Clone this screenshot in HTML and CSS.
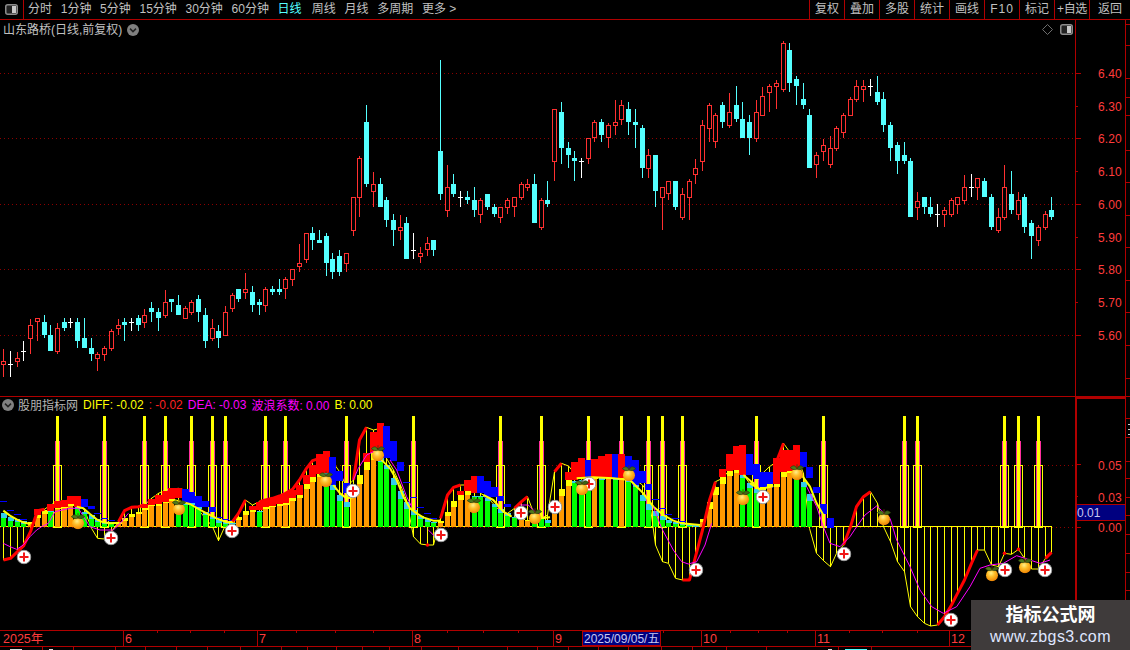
FILE: index.html
```html
<!DOCTYPE html>
<html lang="zh-CN">
<head>
<meta charset="utf-8">
<title>山东路桥</title>
<link rel="stylesheet" href="styles.css">
</head>
<body>
<div class="app">
  <header class="toolbar">
    <div class="tool-left">
      <div class="icon-cell"><svg class="win-icon" width="13" height="11" viewBox="0 0 13 11"><rect x="0.75" y="0.75" width="11.5" height="9.5" rx="2" fill="#222" stroke="#8c8c8c" stroke-width="1.5"/><rect x="7" y="2" width="4" height="7" fill="#c8c8c8"/></svg></div>
      <nav class="periods">
        <span>分时</span><span>1分钟</span><span>5分钟</span><span>15分钟</span><span>30分钟</span><span>60分钟</span><span class="on">日线</span><span>周线</span><span>月线</span><span>多周期</span><span>更多 &gt;</span>
      </nav>
    </div>
    <nav class="actions">
      <span>复权</span><span>叠加</span><span>多股</span><span>统计</span><span>画线</span><span class="f10">F10</span><span>标记</span><span class="narrow">+自选</span><span>返回</span>
    </nav>
  </header>

  <section class="panel panel-price">
    <svg id="price" class="chart" viewBox="0 20 1130 376" width="1130" height="376"></svg>
    <div class="title">山东路桥(日线,前复权)<svg class="chev" width="12" height="12" viewBox="0 0 12 12"><circle cx="6" cy="6" r="6" fill="#808080"/><path d="M3 4.6 6 7.6 9 4.6" fill="none" stroke="#222" stroke-width="1.5"/></svg></div>
    <div class="corner">
      <svg width="11" height="11" viewBox="0 0 11 11"><path d="M5.5 0.5 10.5 5.5 5.5 10.5 0.5 5.5Z" fill="none" stroke="#6e6e6e"/></svg>
      <svg width="13" height="11" viewBox="0 0 13 11"><rect x="0.75" y="0.75" width="11.5" height="9.5" rx="2" fill="#222" stroke="#8c8c8c" stroke-width="1.5"/><rect x="7" y="2" width="4" height="7" fill="#c8c8c8"/></svg>
    </div>
  </section>

  <section class="panel panel-ind">
    <svg id="ind" class="chart" viewBox="0 397 1130 233" width="1130" height="233">
      <defs>
        <radialGradient id="orange" cx="0.42" cy="0.32" r="0.75">
          <stop offset="0" stop-color="#fff08a"/>
          <stop offset="0.4" stop-color="#ffbe28"/>
          <stop offset="0.85" stop-color="#f08a08"/>
          <stop offset="1" stop-color="#b86000"/>
        </radialGradient>
        <symbol id="fruit" viewBox="0 0 14 17" width="14" height="17">
          <circle cx="7" cy="10.8" r="6" fill="url(#orange)"/>
          <path d="M7 5.6 C5.5 1.5 3 1.5 0.3 4.2 C2.5 6.2 5 6.6 7 5.6Z" fill="#4f7a1c" stroke="#26380c" stroke-width="0.6"/>
          <path d="M7 5.6 C8.5 1.5 11 1.5 13.7 4.2 C11.5 6.2 9 6.6 7 5.6Z" fill="#3f6416" stroke="#26380c" stroke-width="0.6"/>
          <path d="M7 5.6 7 0.8" stroke="#5a3408" stroke-width="1"/>
        </symbol>
        <symbol id="plus" viewBox="0 0 15 15" width="15" height="15">
          <circle cx="7.5" cy="7.5" r="6.8" fill="#fff" stroke="#9a9a9a" stroke-width="1"/>
          <path d="M7.5 3v9M3 7.5h9" stroke="#f01818" stroke-width="2"/>
        </symbol>
      </defs>
    </svg>
    <div class="legend">
      <svg class="chev" width="12" height="12" viewBox="0 0 12 12"><circle cx="6" cy="6" r="6" fill="#808080"/><path d="M3 4.6 6 7.6 9 4.6" fill="none" stroke="#222" stroke-width="1.5"/></svg>
      <span class="lg-name">股朋指标网</span>
      <span class="lg-y">DIFF: -0.02</span>
      <span class="lg-r">: -0.02</span>
      <span class="lg-m">DEA: -0.03</span>
      <span class="lg-m">波浪系数: 0.00</span>
      <span class="lg-y">B: 0.00</span>
    </div>
  </section>

  <div class="timeaxis"><svg id="time" viewBox="0 631 1130 15" width="1130" height="15"></svg></div>
  <div class="status" id="status"></div>

  <aside class="watermark">
    <div class="wm-title">指标公式网</div>
    <div class="wm-url">www.zbgs3.com</div>
  </aside>
</div>
<script src="chart.js"></script>
</body>
</html>
```

FILE: styles.css
```css
* { box-sizing: border-box; }
html, body { margin: 0; padding: 0; background: #000; }
body { font-family: "Liberation Sans", "Noto Sans CJK SC", sans-serif; color: #c0c0c0; }
.app { position: relative; width: 1130px; height: 650px; overflow: hidden; display: flex; flex-direction: column; background: #000; }

.toolbar { flex: 0 0 20px; display: flex; justify-content: space-between; border-bottom: 1px solid #b00000; font-size: 12px; line-height: 19px; }
.tool-left { display: flex; }
.icon-cell { width: 24px; border-right: 1px solid #b00000; display: flex; align-items: center; justify-content: center; padding-bottom: 1px; }
.periods { display: flex; gap: 8.7px; padding-left: 4px; }
.periods span { white-space: nowrap; }
.periods .on { color: #55ffff; margin-right: 1.5px; }
.actions { display: flex; }
.actions span { width: 35px; text-align: center; border-left: 1px solid #b00000; white-space: nowrap; }
.actions span:last-child { width: 41px; }
.actions .f10 { letter-spacing: 1px; }
.actions .narrow { letter-spacing: -0.3px; }

.panel { position: relative; flex: none; }
.panel-price { height: 376px; }
.panel-ind { height: 234px; border-top: 1px solid #b00000; }
.chart { display: block; }

.title { position: absolute; left: 3px; top: 2px; font-size: 12px; line-height: 16px; display: flex; align-items: center; gap: 5px; white-space: nowrap; }
.corner { position: absolute; left: 1042px; top: 4px; display: flex; gap: 7px; align-items: center; }
.corner svg { display: block; }

.legend { position: absolute; left: 2px; top: 0; height: 15px; display: flex; align-items: center; font-size: 12px; white-space: nowrap; }
.legend span { margin-left: 5px; }
.legend .lg-name { margin-left: 4px; }
.lg-name { color: #b4b4b4; }
.lg-y { color: #ffff00; }
.lg-r { color: #ff2020; }
.lg-m { color: #ff00ff; }

.timeaxis { flex: 0 0 17px; border-top: 1px solid #b00000; border-bottom: 1px solid #b00000; }
.timeaxis svg { display: block; }
.status { flex: 1; display: flex; overflow: hidden; }
.status .cell { flex: none; border-right: 1px solid #b00000; height: 3px; padding-top: 2px; }
.status .mark { display: block; height: 1px; background: #e0e0e0; }
.status .mark.cy { background: #55ffff; }

.watermark { position: absolute; left: 971px; top: 600px; width: 159px; height: 50px; background: #3f3b3b; text-align: center; }
.wm-title { font-size: 18px; line-height: 24px; font-weight: 700; color: #fff; padding-top: 3px; }
.wm-url { font-size: 16px; line-height: 19px; color: #dfe6ff; letter-spacing: 0.4px; }

.t-axis { font-size: 12px; fill: #ff3c3c; font-family: "Liberation Sans", sans-serif; letter-spacing: 0.1px; }
.t-sel { font-size: 12px; fill: #c8c8f0; font-family: "Liberation Sans", "Noto Sans CJK SC", sans-serif; }
.t-time { font-size: 12.5px; fill: #ff3c3c; font-family: "Liberation Sans", "Noto Sans CJK SC", sans-serif; }
```

FILE: chart.js
```js
const NS = 'http://www.w3.org/2000/svg';
const el = (p, n, a, t) => {
  const e = document.createElementNS(NS, n);
  for (const k in a) e.setAttribute(k, a[k]);
  if (t !== undefined) e.textContent = t;
  p.appendChild(e);
  return e;
};
const RED = '#b00000', DOT = '#8c0000';
const cx = i => Math.round(3.3 + 6.718 * i);
const rect = (p, x, y, w, h, f) => el(p, 'rect', { x, y, width: w, height: Math.max(h, 0), fill: f, 'shape-rendering': 'crispEdges' });
const hline = (p, x1, x2, y, c, dash) => el(p, 'line', Object.assign({ x1, x2, y1: y, y2: y, stroke: c, 'shape-rendering': 'crispEdges' }, dash ? { 'stroke-dasharray': dash } : {}));
const vline = (p, x, y1, y2, c, w) => el(p, 'line', { x1: x, x2: x, y1, y2, stroke: c, 'stroke-width': w || 1, 'shape-rendering': 'crispEdges' });

/* ---------- price panel: candles as [type, high, low, bodyTop, bodyBottom] ---------- */
const A = [['r',388,470,424,434],['w',393,470,433,433],['r',397,440,415,425],['w',363,422,394,394],['r',297,402,316,356],['r',295,362,295,307],['c',286,354,307,345],['c',316,393,346,393],['r',310,402,325,395],['c',295,333,307,324],['w',295,324,307,307],['c',295,384,307,363],['c',295,384,355,384],['c',355,423,385,402],['r',397,453,403,416],['r',379,423,385,404],['r',328,393,334,386],['r',297,346,316,326],['c',295,363,307,315],['w',295,333,307,307],['c',286,333,295,315],['r',267,324,286,308],['c',247,306,265,276],['c',265,333,277,294],['r',210,294,247,287],['c',237,276,237,246],['c',226,285,256,285],['r',258,297,265,297],['r',241,285,247,278],['c',226,306,237,276],['c',265,384,286,363],['r',297,363,325,357],['c',316,384,334,354],['r',258,347,277,347],['r',220,276,226,266],['c',207,246,207,237],['r',160,237,208,218],['c',198,276,217,255],['c',238,285,247,255],['r',202,276,208,258],['c',198,225,207,216],['c',178,225,207,216],['r',172,237,178,208],['r',148,198,148,179],['r',72,156,130,140],['r',40,129,40,119],['c',22,90,40,60],['c',30,70,60,69],['c',40,168,48,129],['c',100,177,118,156],['c',91,168,108,156],['r',100,156,100,131]];
const B = [['r',441,557,442,542],['r',319,500,325,443],['c',166,411,217,402],['r',366,470,403,425],['c',385,470,403,470],['c',442,530,451,509],['c',492,588,511,539],['r',496,570,532,542],['c',502,627,520,627],['w',550,627,601,601],['r',592,638,610,620],['r',562,618,580,601],['c',570,618,570,600],['c',30,450,304,432],['r',346,500,412,482],['c',373,441,403,432],['w',423,471,442,442],['c',423,462,442,451],['c',412,500,451,480],['r',445,518,451,494],['c',432,480,432,471],['c',463,501,472,492],['r',472,519,472,503],['r',445,492,451,473],['r',442,500,442,472],['r',397,450,403,443],['r',388,423,403,413],['c',373,519,403,519],['r',445,540,451,533],['c',393,471,451,462],['r',178,393,178,335],['c',157,342,186,294],['c',277,354,295,315],['c',304,393,324,333],['w',325,384,334,334],['r',265,342,265,326],['r',211,275,217,265],['c',208,276,217,255],['r',220,294,226,265],['r',151,255,217,227],['r',151,225,166,209],['c',157,255,178,216],['c',178,294,217,225],['c',226,384,235,354],['r',298,384,316,356],['c',316,471,316,423],['r',412,540,412,443],['r',394,450,394,433],['c',394,480,394,471],['r',415,510,433,503],['r',388,510,394,443],['r',328,402,355,374],['r',211,363,226,335],['r',160,276,166,236],['r',190,294,196,277]];
const C = [['c',217,294,226,276],['r',190,294,247,288],['c',168,276,226,266],['c',217,324,268,324],['c',256,375,277,324],['r',211,335,247,327],['r',172,258,199,258],['r',163,247,169,189],['r',151,237,160,170],['r',33,186,40,179],['c',40,186,60,159],['c',139,226,148,168],['c',160,237,208,225],['c',238,414,256,414],['r',367,444,376,404],['r',328,393,346,365],['r',319,414,355,404],['r',289,364,295,356],['r',250,324,256,308],['r',202,258,208,258],['r',151,216,169,209],['r',151,216,169,179],['w',148,198,169,169],['c',139,225,186,216],['c',187,306,208,285],['c',277,393,286,354],['c',337,432,346,393],['c',337,402,376,393],['c',385,561,394,561],['r',487,570,512,533],['c',502,552,502,531],['c',502,561,532,552],['w',522,590,553,553],['r',532,590,541,554],['r',505,560,511,554],['r',502,552,502,524],['r',436,522,472,513],['w',432,501,472,472],['r',445,510,445,473],['c',445,501,454,501],['c',492,600,502,591],['r',534,608,562,603],['r',406,570,472,563],['c',423,552,492,540],['r',487,570,511,554],['c',492,608,502,591],['c',571,687,580,618],['r',584,648,592,632],['r',544,600,553,594],['c',502,570,541,561]];
const conv = (list, oy) => list.map(c => [c[0], oy + c[1] / 3, oy + c[2] / 3, oy + c[3] / 3, oy + c[4] / 3].map((v, k) => k ? Math.round(v) : v));
const candles = [...conv(A, 220), ...conv(B, 50), ...conv(C, 30)];

const price = document.getElementById('price');
[73, 138, 204, 269, 335].forEach(y => hline(price, 0, 1075, y + .5, DOT, '1 3'));
const CY = '#54ffff', CR = '#ff3030', CW = '#ffffff';
candles.forEach((c, i) => {
  const x = cx(i), [t, hi, lo, top, bot] = c;
  if (t === 'w') {
    rect(price, x, hi, 1, lo - hi, CW);
    rect(price, x - 2, top, 5, 1, CW);
  } else if (t === 'c') {
    rect(price, x, hi, 1, lo - hi, CY);
    rect(price, x - 2, top, 5, bot - top, CY);
  } else {
    rect(price, x, hi, 1, lo - hi, CR);
    el(price, 'rect', { x: x - 1.5, y: top + .5, width: 4, height: Math.max(bot - top - 1, 1), fill: '#000', stroke: CR, 'shape-rendering': 'crispEdges' });
  }
});
/* axis */
vline(price, 1075.5, 20, 396, RED);
vline(price, 1125.5, 20, 396, RED);
[['6.40',74],['6.30',107],['6.20',139],['6.10',172],['6.00',205],['5.90',238],['5.80',270],['5.70',303],['5.60',336]].forEach(([t, y], k) => {
  rect(price, 1076, y - 1, k % 2 ? 2 : 5, 1, RED);
  el(price, 'text', { x: 1098, y: y + 4, class: 't-axis' }, t);
});
[24, 45, 78, 97, 115, 150, 182, 215, 247, 280, 312, 345, 378].forEach(y => rect(price, 1126, y, 4, 1, RED));

/* ---------- indicator panel (all y values: reference row = 390 + y/3) ---------- */
const ind = document.getElementById('ind');
const Y = z => 390 + z / 3;
hline(ind, 0, 1075, 465.5, DOT, '1 3');
hline(ind, 0, 1075, 527.5, DOT, '1 3');

const spikes = [8,15,21,24,28,31,33,39,42,51,61,74,80,87,92,96,98,101,112,122,134,136,149,151,154];
spikes.forEach(i => {
  const x = cx(i);
  rect(ind, x - 2, 441, 5, 86, '#ff2f9f');
  rect(ind, x - 1, 416, 3, 111, '#ffff00');
  el(ind, 'rect', { x: x - 3.5, y: 465.5, width: 8, height: 61.5, fill: 'none', stroke: '#ffff00', 'shape-rendering': 'crispEdges' });
});

const diff = [510,505,485,468,425,362,358,345,335,332,330,340,360,415,445,447,425,395,362,352,350,345,325,310,300,297,295,300,330,360,385,410,452,405,395,370,330,345,335,330,325,318,310,298,270,235,212,205,205,215,245,290,270,150,112,120,115,205,240,285,330,440,462,465,465,385,315,292,285,285,290,310,322,345,365,370,355,335,320,375,385,375,245,220,228,250,265,265,262,262,262,265,265,265,270,285,310,465,515,520,565,570,570,500,420,330,275,265,240,230,250,280,275,250,230,215,160,185,200,250,415,490,512,530,490,465,410,350,320,305,340,410,455,515,545,650,680,700,708,705,680,645,610,570,520,480,480,525,530,490,493,478,505,537,537,505,487];
const pts = idx => idx.map(i => (cx(i) + .5) + ',' + Y(diff[i])).join(' ');
const base = 527;
diff.forEach((d, i) => {
  const y = Y(d);
  vline(ind, cx(i) + .5, Math.min(y, base), Math.max(y, base), '#ffff00');
});
el(ind, 'line', { x1: 0, x2: cx(156) + 1, y1: 526.5, y2: 526.5, stroke: '#ffff00', 'stroke-width': 1.5, 'shape-rendering': 'crispEdges' });
el(ind, 'polyline', { points: pts(diff.map((_, i) => i)), fill: 'none', stroke: '#ffff00', 'stroke-width': 1 });

const bars = [['g',370,384,'b',333,335],['g',381,393,'b',360,362],['g',388,397,'b',372,374],['g',393,401,'b',388,390],['o',395,401],['o',375,385,'r',358,375],['o',361,372],['g',362,365,'r',342,362],['o',353,358,'r',332,353],['o',350,354,'r',330,350],['o',342,347,'r',318,342],['g',350,358,'r',318,350],['g',365,372,'b',327,352],['g',375,387,'b',348,357],['g',388,396,'b',368,371],['g',396,403,'b',384,387],['g',396,403,'b',390,393],['o',397,402],['o',385,392],['o',373,381],['o',365,372],['o',354,360,'r',342,354],['o',345,349,'r',328,345],['o',343,347,'r',315,343],['o',335,340,'r',303,335],['o',328,332,'r',294,328],['g',345,350,'r',293,325],['g',340,345,'b',297,340],['g',340,345,'b',305,340],['g',352,358,'b',318,352],['g',367,376,'b',333,350],['g',380,388,'b',352,365],['g',390,398,'b',380,383],['g',397,403,'b',388,391],['g',398,403,'b',391,394],['o',381,390],['o',363,375],['o',360,365,'r',348,360],['g',362,365,'r',335,360],['o',350,356,'r',330,350],['o',347,352,'r',325,347],['o',343,348,'r',318,343],['o',338,345,'r',310,338],['o',325,333,'r',300,325],['o',315,325,'r',285,315],['o',282,298,'r',255,282],['o',260,275,'r',225,260],['o',253,262,'r',192,253],['g',250,258,'r',183,250],['g',285,300,'b',200,285],['g',315,333,'b',243,273],['g',335,350,'b',280,310],['o',305,322],['o',255,282],['o',215,240,'r',190,215],['o',190,210,'r',125,190],['g',205,215,'r',100,175],
['g',225,237,'b',108,205],['g',263,285,'b',153,213],['g',303,327,'b',215,243],['g',337,357,'b',277,280],['g',360,375,'b',321,323],['g',378,387,'b',351,353],['g',388,395,'b',369,371],['g',395,400,'b',384,386],['o',393,398],['o',367,378],['o',333,351],['o',315,330,'r',303,315],['o',303,315,'r',270,303],['g',318,322,'r',258,310],['g',318,322,'b',258,310],['g',323,333,'b',273,323],['g',342,352,'b',292,320],['g',357,370,'b',318,333],['g',368,378,'b',342,352],['g',380,384],['o',386,390],['o',390,394],['g',384,388],['g',382,386],['g',390,400],['o',362,370],['o',297,318],['o',270,288,'r',245,270],['g',273,278,'r',215,270],['g',270,275,'r',205,265],['g',264,268,'b',210,262],['o',264,268,'r',207,264],['g',263,270,'r',198,263],['o',264,268,'r',192,264],['g',266,270,'b',192,265],['o',264,268,'r',192,264],['g',268,275,'b',197,260],['g',285,292,'b',210,285],['g',315,333,'b',243,280],['g',342,360,'b',282,300],['g',363,378,'b',327,329],['g',378,390,'b',354,356],['g',390,398,'b',372,374],['g',396,403,'b',385,387],['g',398,405,'b',392,394],['g',402,407],['g',405,410],['o',388,396],['o',336,357],['o',292,315],['o',262,283,'r',238,262],['o',243,258,'r',192,243],['o',240,248,'r',168,240],['g',255,263,'r',165,255],['g',280,295,'b',192,255],['g',297,310,'b',222,268],
['o',290,300,'b',245,293],['o',283,290,'b',245,293],['o',282,290,'r',205,282],['o',245,260,'r',180,245],['o',243,250,'r',180,243],['g',240,248,'r',165,235],['g',277,292,'b',186,232],['g',312,333,'b',232,263],[null,0,0,'b',292,310],[null,0,0,'b',342,372],[null,0,0,'b',384,413]];
const COLS = { g: '#00ff00', o: '#ff9900' };
const CAPS = { g: '#33ccee', o: '#ffff00' };
const EXT = { r: '#ff0000', b: '#0000ff' };
const snap = z => Math.round(Y(z));
bars.forEach((b, i) => {
  const x = cx(i), [t, c1, c2, e, e1, e2] = b;
  if (e) rect(ind, x - 3, snap(e1), 7, Math.max(snap(e2) - snap(e1), 1), EXT[e]);
  if (t) {
    rect(ind, x - 2, snap(c2), 5, base - snap(c2), COLS[t]);
    rect(ind, x - 2, snap(c1), 6, Math.max(snap(c2) - snap(c1), 1), CAPS[t]);
  }
});

/* thick smoothing lines */
const zline = (ox, list, stroke, w) => el(ind, 'polyline', { points: list.map(p => (ox + p[0] / 3) + ',' + Y(p[1])).join(' '), fill: 'none', stroke, 'stroke-width': w, 'stroke-linejoin': 'round' });
[[0, [[10,362],[30,377],[50,388],[70,397],[90,402]]],
 [0, [[230,350],[250,355],[270,372],[290,388],[310,397],[330,400],[360,398]]],
 [0, [[520,330],[570,342],[610,365],[650,385],[680,397],[705,395]]],
 [0, [[1000,285],[1020,310],[1040,325],[1060,322]]],
 [380, [[0,205],[30,235],[50,270],[70,320],[90,355],[110,370],[130,382],[160,392],[180,392]]],
 [380, [[310,315],[340,330],[370,365],[395,380]]],
 [380, [[480,385],[510,382]]],
 [380, [[590,265],[640,262],[700,265],[750,270],[790,310],[820,350],[850,375],[880,392],[905,400],[960,405]]],
 [380, [[1090,255],[1120,280],[1140,300]]],
 [750, [[0,280],[30,298],[70,288]]],
 [750, [[140,240],[160,262],[180,290],[200,340],[220,375]]]
].forEach(([ox, l]) => zline(ox, l, '#ffff00', 2));

const range = (a, b) => Array.from({ length: b - a + 1 }, (_, k) => a + k);
[[0,6],[17,21],[34,36],[38,47],[52,54],[65,68],[76,78],[82,83],[101,106],[115,116],[125,129],[139,145],[155,156]].forEach(([a, b]) => {
  el(ind, 'polyline', { points: pts(range(a, b)), fill: 'none', stroke: '#ff0000', 'stroke-width': 3, 'stroke-linejoin': 'round' });
});
[63, 149, 151].forEach(i => el(ind, 'circle', { cx: cx(i) + .5, cy: Y(diff[i]), r: 1.8, fill: '#ff0000' }));

/* DEA */
[[0, [[10,460],[30,470],[50,478],[70,465],[90,440],[110,420],[125,410],[145,400],[165,365],[210,355],[235,355],[270,410],[300,420],[340,420],[365,395],[385,370]]],
 [0, [[1060,270],[1075,235],[1100,195],[1140,175]]],
 [380, [[30,210],[50,240],[80,320],[95,350]]],
 [380, [[145,420],[165,440]]],
 [380, [[420,345],[445,345],[470,370]]],
 [380, [[820,350],[845,415],[880,480],[905,515],[925,522],[950,515],[975,465],[995,400]]],
 [750, [[170,290],[200,350],[220,410],[240,460],[270,470],[300,440],[320,410],[345,375],[380,348],[420,385],[440,450],[480,530],[510,600],[545,650],[580,670],[620,650],[660,590],[690,535],[720,525],[760,520],[800,497],[840,510],[870,520],[900,510]]]
].forEach(([ox, l]) => zline(ox, l, '#ff00ff', 1));

/* markers */
const use = (id, x, y, w, h) => el(ind, 'use', { href: '#' + id, x: x - w / 2, y: y - h / 2, width: w, height: h });
[[24,557],[111,538],[232,531],[353,491],[441,535],[521,513],[555,507],[589,484],[696,570],[763,497],[844,554],[951,620],[1005,570],[1045,570]].forEach(([x, y]) => use('plus', x, y, 15, 15));
[[78,521],[179,507],[326,479],[378,453],[474,505],[535,516],[582,487],[629,473],[743,497],[797,472],[884,517],[992,573],[1025,565]].forEach(([x, y]) => use('fruit', x, y, 14, 17));

/* right axis */
rect(ind, 1075, 397, 2, 233, RED);
rect(ind, 1125, 397, 1, 233, RED);
rect(ind, 1075, 397, 51, 2, RED);
rect(ind, 1077, 464, 4, 1, RED);
rect(ind, 1077, 496, 1, 1, RED);
rect(ind, 1077, 527, 4, 1, RED);
[418, 437, 461, 478, 497, 515, 534, 553, 572, 590, 609].forEach(y => rect(ind, 1126, y, 4, 1, RED));
[424, 429, 434].forEach(y => rect(ind, 1128, y, 2, 1, '#cccccc'));
[['0.05', 470], ['0.03', 502], ['0.00', 532]].forEach(([t, y]) => el(ind, 'text', { x: 1098, y, class: 't-axis' }, t));
rect(ind, 1077, 505, 48, 15, '#000080');
rect(ind, 1077, 504, 48, 1, RED);
rect(ind, 1077, 520, 48, 1, RED);
el(ind, 'text', { x: 1077, y: 517, class: 't-sel' }, '0.01');

/* ---------- time axis ---------- */
const time = document.getElementById('time');
[157,190,224,296,335,373,447,483,518,663,730,758,787,849,882,917,980,1015,1050].forEach(x => rect(time, x, 631, 1, 2, RED));
[[123,'6'],[257,'7'],[412,'8'],[553,'9'],[701,'10'],[815,'11'],[949,'12']].forEach(([x, t]) => {
  rect(time, x, 631, 1, 15, RED);
  el(time, 'text', { x: x + 2, y: 643, class: 't-time' }, t);
});
el(time, 'text', { x: 3, y: 643, class: 't-time' }, '2025年');
rect(time, 583, 631, 77, 15, '#000080');
el(time, 'rect', { x: 582.5, y: 631.5, width: 78, height: 14, fill: 'none', stroke: RED, 'shape-rendering': 'crispEdges' });
el(time, 'text', { x: 584, y: 643, class: 't-sel' }, '2025/09/05/五');

/* ---------- status strip: only the top rows of its tabs are in view ---------- */
const status = document.getElementById('status');
const cuts = [43,74,116,146,177,208,241,282,308,337,363,390,422,459,508,538,569,599,629,662,693,727,767,839,872];
const marks = { 0: [10, 12], 1: [6, 4], 23: [61, 4], 24: [6, 22, 'cy'] };
cuts.forEach((c, k) => {
  const cell = document.createElement('div');
  cell.className = 'cell';
  cell.style.width = (c - (k ? cuts[k - 1] : 0)) + 'px';
  const m = marks[k];
  if (m) {
    const d = document.createElement('i');
    d.className = 'mark' + (m[2] ? ' cy' : '');
    d.style.marginLeft = m[0] + 'px';
    d.style.width = m[1] + 'px';
    cell.appendChild(d);
  }
  status.appendChild(cell);
});
```
